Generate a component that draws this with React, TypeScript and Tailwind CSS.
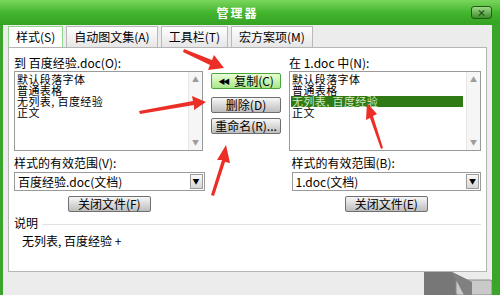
import type { ReactNode } from 'react';

const font = { fontFamily: '"Noto Sans CJK SC", "Liberation Sans", sans-serif' };

function Tab({ label, active }: { label: string; active?: boolean }) {
  return (
    <div
      className={`flex h-[21px] items-center px-[7px] text-[12px] text-black ${
        active
          ? 'border border-b-0 border-[#8fd68a] bg-white'
          : 'mt-[2px] h-[19px] border border-b-0 border-[#b9b9b9] bg-gradient-to-b from-white to-[#e6e6e6]'
      }`}
    >
      {label}
    </div>
  );
}

function Btn({ children, green, className = '' }: { children: ReactNode; green?: boolean; className?: string }) {
  return (
    <div
      className={`flex h-[16px] items-center justify-center rounded-[2px] border text-[12px] leading-none text-black ${
        green
          ? 'border-[#4ea53c] bg-gradient-to-b from-[#e9ffd8] to-[#a8e68a]'
          : 'border-[#6f6f6f] bg-gradient-to-b from-[#f7f7f7] to-[#bdbdbd]'
      } ${className}`}
    >
      {children}
    </div>
  );
}

function ListBox({ selected }: { selected?: number }) {
  const items = ['默认段落字体', '普通表格', '无列表, 百度经验', '正文'];
  return (
    <div className="flex h-[80px] border border-[#9a9a9a] bg-white">
      <div className="flex-1 pt-[2px] pl-[1px]">
        {items.map((item, i) => (
          <div
            key={item}
            className={`h-[11px] pl-[1px] text-[11px] leading-[11px] tracking-[0.4px] ${
              i === selected ? 'w-[172px] bg-[#2f7a14] text-[#cfe8c0]' : 'text-black'
            }`}
          >
            {item}
          </div>
        ))}
      </div>
      <div className="flex w-[14px] flex-col items-center justify-between border-l border-[#e6e6e6] bg-[#f6f6f6] py-[4px] text-[7px] leading-none text-[#9c9c9c]">
        <span>▲</span>
        <span>▼</span>
      </div>
    </div>
  );
}

function Select({ value }: { value: string }) {
  return (
    <div className="flex h-[19px] items-center border border-[#9a9a9a] bg-white pl-[3px] pr-[1px]">
      <span className="flex-1 text-[12px] leading-none text-black">{value}</span>
      <div className="flex h-[15px] w-[13px] items-center justify-center border border-[#9c9c9c] bg-gradient-to-b from-[#fafafa] to-[#d6d6d6] text-[7px] text-black">
        ▼
      </div>
    </div>
  );
}

function Arrows() {
  return (
    <svg className="pointer-events-none absolute left-0 top-0" width="500" height="295">
      <g fill="#ec2f26">
        {/* 复制 */}
        <polygon points="184,49 212,60 214,55 224,68 208,70 210,65 183,52" />
        {/* 删除 */}
        <polygon points="139,111 193,101 192,96 206,102 194,110 194,105 140,114" />
        {/* 重命名 */}
        <polygon points="211,195 222,160 217,160 226,145 230,163 225,162 214,196" />
        {/* 右侧列表 */}
        <polygon points="381,149 370,118 366,120 367,103 377,114 373,116 383,148" />
      </g>
    </svg>
  );
}

export default function App() {
  return (
    <div className="relative h-[295px] w-[500px] overflow-hidden bg-[#3aa52a]" style={font}>
      <div className="flex h-[25px] items-center bg-gradient-to-b from-[#79d65c] via-[#44b52f] to-[#35a222] pl-[4px] pr-[8px]">
        <div className="flex-1 pt-[1px] text-center text-[12px] font-bold tracking-[2px] text-white">管理器</div>
        <div className="flex h-[13px] w-[21px] items-center justify-center rounded-[3px] border border-[#1f5d12] bg-gradient-to-b from-[#9fd98a] to-[#3b8f28] text-[9px] font-bold leading-none text-[#1e4a14]">
          ×
        </div>
      </div>

      <div className="ml-[3px] mr-[8px] flex h-[270px] flex-col bg-[#ececec]">
        <div className="flex h-[22px] items-end gap-[3px] pl-[5px]">
          <Tab label="样式(S)" active />
          <Tab label="自动图文集(A)" />
          <Tab label="工具栏(T)" />
          <Tab label="宏方案项(M)" />
        </div>

        <div className="mx-[5px] flex h-[225px] flex-col border border-[#b5b5b5] bg-white px-[5px]">
          <div className="flex gap-[8px] pt-[9px]">
            <div className="flex w-[192px] flex-col">
              <div className="h-[14px] text-[12px] leading-[12px] text-black">到 百度经验.doc(O):</div>
              <ListBox />
            </div>

            <div className="flex w-[71px] flex-col gap-[8px] pt-[16px]">
              <Btn green className="gap-[6px]">
                <span className="text-[7px] tracking-[-2px]">◀◀</span>
                <span>复制(C)</span>
              </Btn>
              <Btn>删除(D)</Btn>
              <Btn className="mt-[-3px]">重命名(R)...</Btn>
            </div>

            <div className="flex w-[195px] flex-col">
              <div className="h-[14px] text-[12px] leading-[12px] text-black">在 1.doc 中(N):</div>
              <ListBox selected={2} />
            </div>
          </div>

          <div className="mt-[6px] flex gap-[87px]">
            <div className="flex w-[192px] flex-col">
              <div className="h-[15px] text-[12px] leading-[12px] text-black">样式的有效范围(V):</div>
              <Select value="百度经验.doc(文档)" />
              <div className="mt-[5px] flex justify-center">
                <Btn className="w-[83px]">关闭文件(F)</Btn>
              </div>
            </div>
            <div className="flex w-[191px] flex-col">
              <div className="h-[15px] text-[12px] leading-[12px] text-black">样式的有效范围(B):</div>
              <Select value="1.doc(文档)" />
              <div className="mt-[5px] flex justify-center">
                <Btn className="w-[83px]">关闭文件(E)</Btn>
              </div>
            </div>
          </div>

          <div className="mt-[5px] flex items-center gap-[4px]">
            <span className="text-[12px] leading-[12px] text-black">说明</span>
            <div className="mt-[2px] h-[1px] flex-1 bg-[#e2e2e2]" />
          </div>
          <div className="mt-[6px] pl-[8px] text-[12px] leading-[12px] text-black">无列表, 百度经验 +</div>
        </div>
      </div>

      <div className="absolute bottom-0 right-0 h-[23px] w-[76px]">
        <svg width="76" height="23">
          <polygon points="0,0 28,0 48,10 48,23 0,23" fill="#777777" />
          <rect x="32" y="8" width="36" height="15" rx="2" fill="#c9c9c9" stroke="#8a8a8a" />
          <polygon points="28,0 48,10 48,23 40,23 32,8" fill="#808080" />
          <rect x="68" y="0" width="8" height="23" fill="#3aa52a" />
        </svg>
      </div>

      <Arrows />
    </div>
  );
}
